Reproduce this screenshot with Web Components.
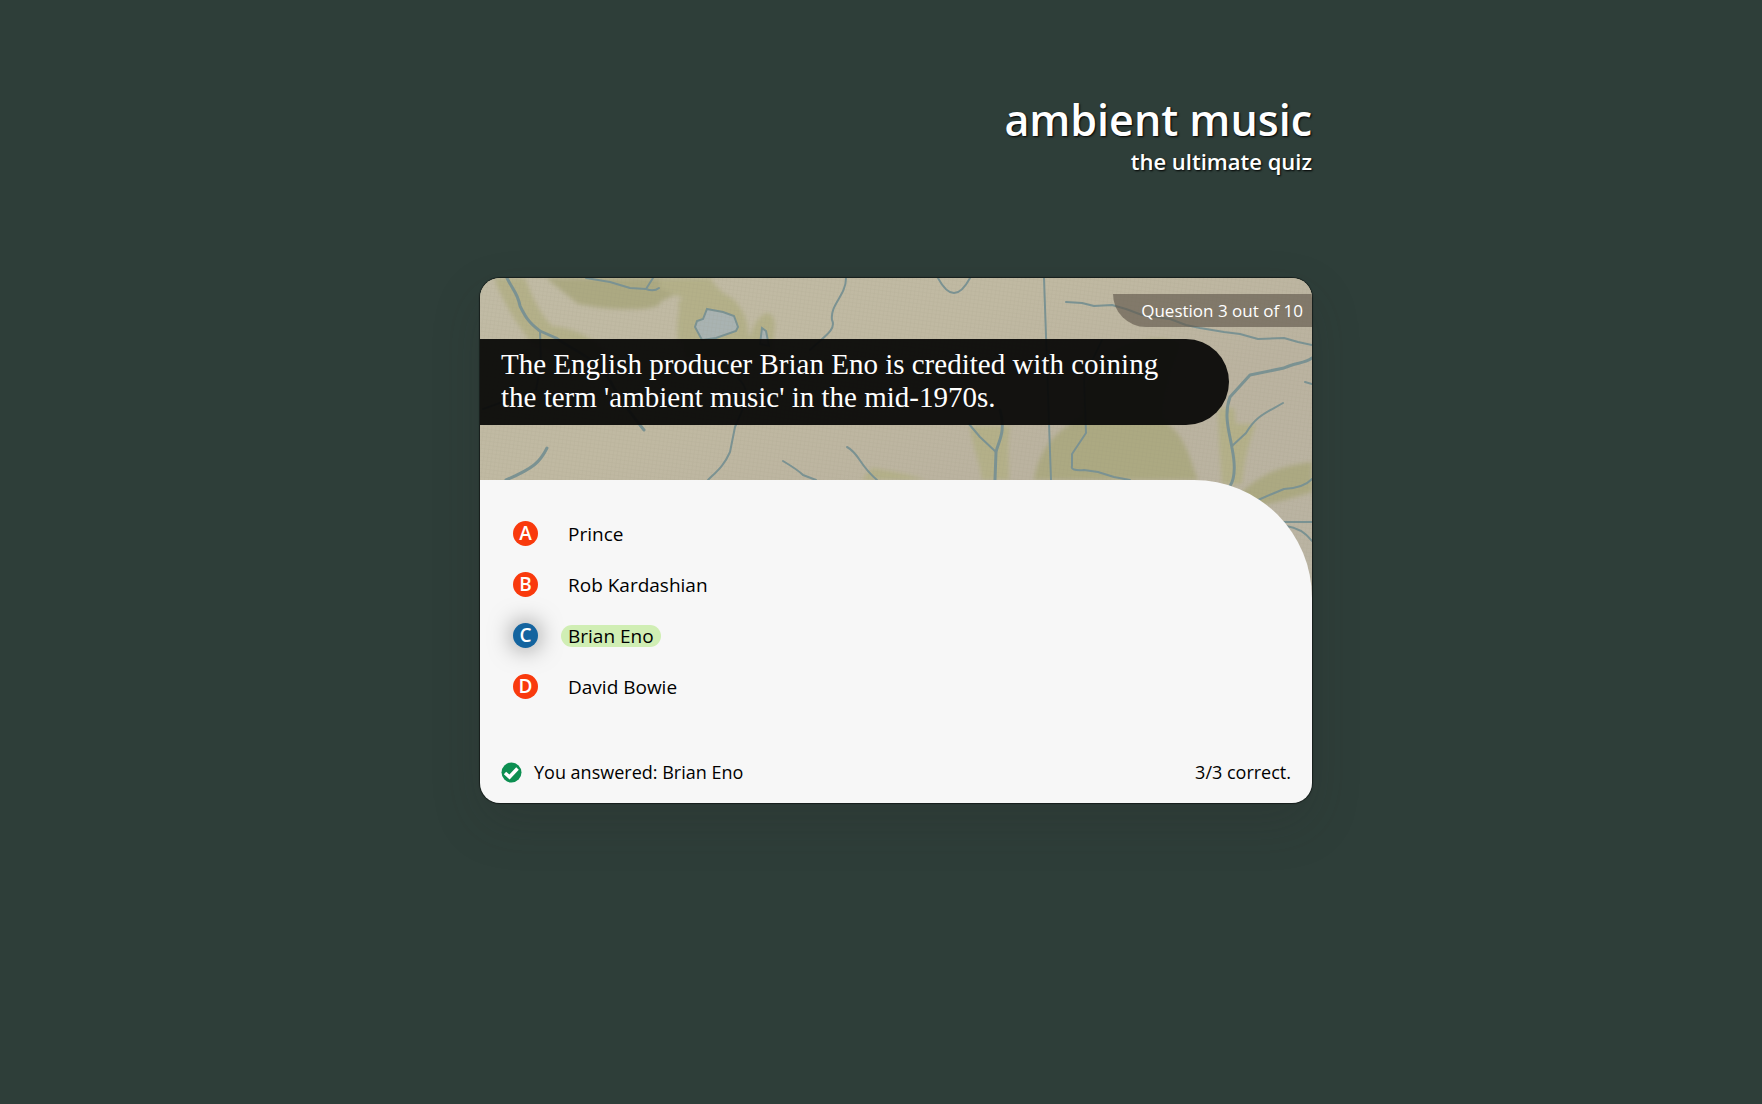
<!DOCTYPE html>
<html lang="en">
<head>
<meta charset="utf-8">
<meta name="viewport" content="width=device-width, initial-scale=1">
<title>ambient music – the ultimate quiz</title>
<style>
  html { background: #2e3e39; }
  body {
    margin: 0;
    min-height: 100vh;
    color: #000;
    font-family: "Open Sans", "Noto Sans", sans-serif;
    font-size: 19px;
    line-height: 24px;
  }
</style>
</head>
<body>
<quiz-page>
  <quiz-title slot="title" heading="ambient music" tagline="the ultimate quiz"></quiz-title>
  <quiz-card>
    <quiz-question slot="question" progress="Question 3 out of 10">The English producer Brian Eno is credited with coining the term 'ambient music' in the mid-1970s.</quiz-question>
    <quiz-option letter="A">Prince</quiz-option>
    <quiz-option letter="B">Rob Kardashian</quiz-option>
    <quiz-option letter="C" chosen>Brian Eno</quiz-option>
    <quiz-option letter="D">David Bowie</quiz-option>
    <quiz-result slot="result" score="3/3 correct.">You answered: Brian Eno</quiz-result>
  </quiz-card>
</quiz-page>

<script>
  const define = (name, render) => customElements.define(name, class extends HTMLElement {
    constructor() {
      super();
      this.attachShadow({ mode: "open" });
    }
    connectedCallback() {
      this.shadowRoot.innerHTML = render(this);
    }
  });

  define("quiz-page", () => `
    <style>
      :host { display: block; padding: 92px 24px 48px 54px; }
      main { max-width: 832px; margin: 0 auto; display: flex; flex-direction: column; gap: 104px; }
    </style>
    <main><slot name="title"></slot><slot></slot></main>`);

  define("quiz-title", el => `
    <style>
      :host { display: block; text-align: right; color: #fff; text-shadow: 1px 1px 2px #000; }
      h1 { margin: 0; font-size: 43px; line-height: 56px; font-weight: 600; }
      p { margin: 0; font-size: 22px; line-height: 26px; font-weight: 600; }
    </style>
    <h1>${el.getAttribute("heading")}</h1>
    <p>${el.getAttribute("tagline")}</p>`);

  define("map-backdrop", () => `
    <style>
      :host { display: block; overflow: hidden; background: #bab29b; }
      svg { display: block; width: 100%; height: 100%; }
      .moss { fill: #aca982; }
      .pale { fill: #b4b089; }
      .line { fill: none; stroke: #7a9293; stroke-width: 2; stroke-linecap: round; stroke-linejoin: round; }
      .thick { stroke-width: 3; }
      .lake { fill: #a9b3b2; stroke: #7a9293; stroke-width: 2; }
    </style>
    <svg viewBox="0 0 832 320" preserveAspectRatio="xMaxYMin slice" aria-hidden="true">
      <defs>
        <linearGradient id="paper" x1="0" y1="0" x2="1" y2="1">
          <stop offset="0" stop-color="#c1bba5"/><stop offset=".35" stop-color="#c0b9a2"/>
          <stop offset=".6" stop-color="#bbb3a0"/><stop offset="1" stop-color="#bab4a3"/>
        </linearGradient>
        <pattern id="weave" width="4" height="4" patternUnits="userSpaceOnUse" patternTransform="rotate(8)">
          <path d="M0 0H4M0 0V4" stroke="#86846f" stroke-width="1" opacity=".14"/>
        </pattern>
        <filter id="soft"><feGaussianBlur stdDeviation="2"/></filter>
      </defs>
      <rect width="832" height="320" fill="url(#paper)"/>
      <g filter="url(#soft)">
        <path class="pale" d="M14 0H45C52 18 60 36 72 48C95 50 114 60 128 76L110 96C85 78 65 70 52 66C34 42 22 22 14 0Z"/>
        <path class="moss" d="M66 0H180L200 14L180 24C184 30 150 36 98 26Z"/>
        <path class="pale" d="M180 0H230C236 8 240 14 252 20C262 30 270 42 268 64H198C196 46 198 34 202 20L180 10Z"/>
        <path class="pale" d="M198 24Q240 4 262 36L270 60C276 34 294 26 295 48L292 80H205Z"/>
        <path class="pale" d="M382 202L392 190Q420 194 446 202Z"/>
        <path class="pale" d="M490 148H530C527 164 529 184 529 202H502C500 184 492 168 490 148Z"/>
        <path class="moss" d="M554 202C560 164 584 148 604 138C602 96 620 78 650 66Q680 56 700 66C690 90 680 120 682 142C706 156 710 182 718 202Z"/>
        <path class="pale" d="M738 130H754L756 146H776C768 166 764 184 762 206H742C740 176 738 154 738 130Z"/>
        <path class="moss" d="M760 216C780 196 800 188 832 184V214Q800 224 778 228Z"/>
      </g>
      <path class="line thick" d="M27 0C34 14 38 16 40 28C45 38 48 44 60 53L76 60C92 72 120 80 134 110Q146 130 164 152"/>
      <path class="line" d="M60 53L61 85L56 112L3 131"/>
      <path class="line" d="M106 0L130 4L150 10L166 11L173 0M166 11Q174 14 179 10"/>
      <path class="lake" d="M227 31L243 34L254 38L258 49L256 53L236 60L222 62L215 49L217 43L223 41Z"/>
      <path class="lake" d="M280 66L282 50L286 53L289 68Z"/>
      <path class="line" d="M366 0C366 18 350 26 352 42C357 52 342 60 330 72"/>
      <path class="line" d="M258 100Q270 112 265 126L255 149L250 174C244 188 236 194 228 202"/>
      <path class="line thick" d="M67 170C60 184 54 190 26 202"/>
      <path class="line" d="M303 183Q318 192 323 197L336 202M367 169C380 176 378 186 397 202"/>
      <path class="line" d="M458 0Q474 30 490 0M564 0L571 202"/>
      <path class="line" d="M586 24L602 25L614 28L632 27L646 31L662 37L690 41L706 47L720 50L744 54L760 56L778 61L804 60L818 64L832 67"/>
      <path class="line thick" d="M520 132C526 154 519 162 516 174L515 202"/>
      <path class="line" d="M489 146L500 159L516 174"/>
      <path class="line" d="M622 62L604 100L606 155L592 176L592 188Q590 193 604 192L618 194L634 199L650 202"/>
      <path class="line thick" d="M832 80C824 86 816 84 804 90L770 97L750 119C743 138 750 156 752 170C756 190 754 202 750 208"/>
      <path class="line" d="M752 168L766 155C776 138 784 136 803 125M825 104L832 106"/>
      <path class="line" d="M778 222L792 216L804 211Q824 210 832 201M803 244H832M806 248Q822 250 832 263"/>
      <rect width="832" height="320" fill="url(#weave)"/>
    </svg>`);

  define("quiz-card", () => `
    <style>
      :host { display: block; }
      article {
        display: grid; grid-template-rows: 202px auto; border-radius: 20px; overflow: hidden;
        box-shadow: 0 0 1px 1px rgba(0, 0, 0, .5), 0 20px 50px rgba(40, 40, 40, .2);
      }
      map-backdrop { grid-area: 1 / 1 / 3 / 2; height: 320px; }
      header { grid-area: 1 / 1; display: grid; position: relative; }
      section {
        grid-area: 2 / 1; position: relative; background: #f7f7f7;
        border-radius: 0 118px 0 0; padding: 28px 21px 18px;
        display: flex; flex-direction: column; gap: 47px;
      }
      .options { display: flex; flex-direction: column; }
    </style>
    <article>
      <map-backdrop></map-backdrop>
      <header><slot name="question"></slot></header>
      <section>
        <div class="options"><slot></slot></div>
        <slot name="result"></slot>
      </section>
    </article>`);

  define("quiz-question", el => `
    <style>
      :host { display: flex; flex-direction: column; gap: 12px; padding-top: 16px; }
      .progress {
        align-self: flex-end; padding: 0 9px 0 28px; color: #fff; background: rgba(99, 90, 78, .66);
        border-radius: 0 0 0 33px; font-size: 17px; line-height: 33px;
      }
      h2 {
        box-sizing: border-box; width: 90%; margin: 0; padding: 9px 48px 11px 21px;
        border-radius: 0 43px 43px 0; background: rgba(10, 10, 8, .95); color: #fff;
        font: 400 29px/33px "Liberation Serif", serif;
      }
    </style>
    <span class="progress">${el.getAttribute("progress")}</span>
    <h2><slot></slot></h2>`);

  define("quiz-option", el => `
    <style>
      :host { display: block; }
      button {
        display: flex; align-items: center; gap: 23px; height: 51px; padding: 0 12px;
        border: 0; background: none; color: #000; font: inherit; cursor: pointer;
      }
      .letter {
        width: 25px; border-radius: 50%; background: #f93a0d; color: #fff;
        line-height: 25px; text-align: center; font-weight: 600;
      }
      .text { padding: 0 7px; border-radius: 11px; line-height: 22px; }
      :host([chosen]) .letter { background: #14649f; box-shadow: 0 0 25px rgba(0, 0, 0, .5); }
      :host([chosen]) .text { background: #d0eeb4; }
    </style>
    <button type="button" aria-pressed="${el.hasAttribute("chosen")}"><span class="letter">${el.getAttribute("letter")}</span><span class="text"><slot></slot></span></button>`);

  define("quiz-result", el => `
    <style>
      :host { display: flex; align-items: center; justify-content: space-between; font-size: 18px; line-height: 26px; }
      .answer { display: flex; align-items: center; gap: 12px; }
      svg { width: 21px; height: 21px; }
    </style>
    <span class="answer">
      <svg viewBox="0 0 42 42" aria-hidden="true"><circle cx="21" cy="21" r="20" fill="#0c8f51"/><path d="M8 22L17 30L33 13" fill="none" stroke="#fff" stroke-width="7"/></svg>
      <span><slot></slot></span>
    </span>
    <span>${el.getAttribute("score")}</span>`);
</script>
</body>
</html>
